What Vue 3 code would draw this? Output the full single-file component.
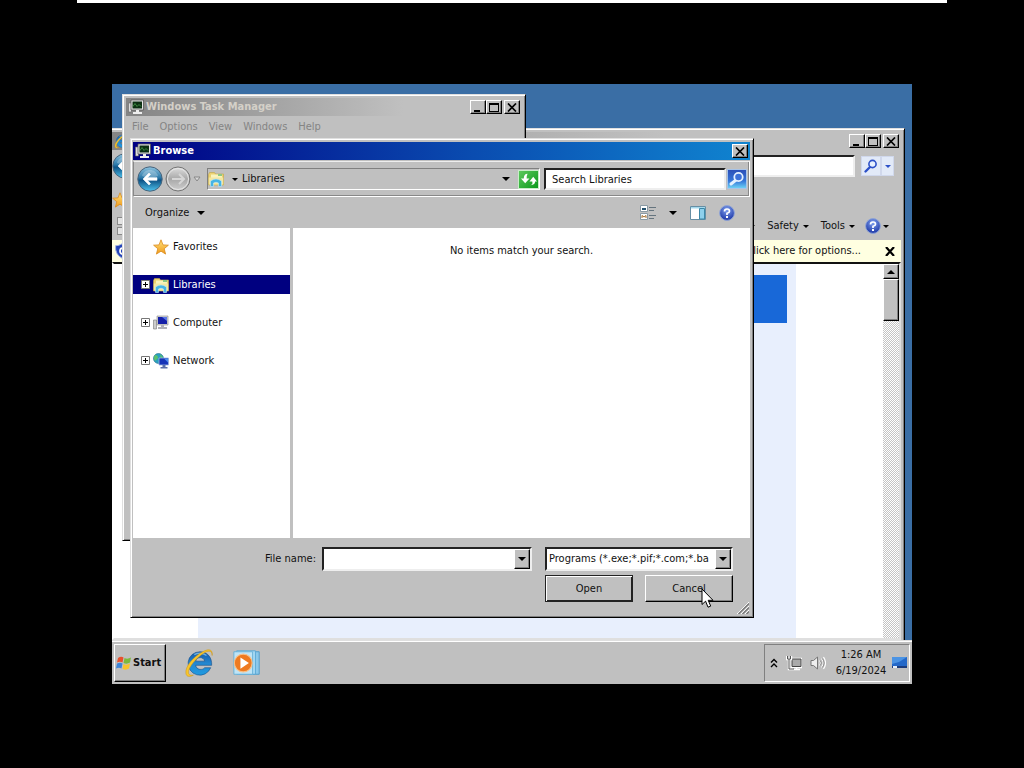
<template>
    <div class="screen">
        <svg class="defs" aria-hidden="true">
            <defs>
                <linearGradient id="gBlue" x1="0" y1="0" x2="0" y2="1">
                    <stop offset="0" stop-color="#8fc4e0" />
                    <stop offset="0.45" stop-color="#2a78a8" />
                    <stop offset="0.55" stop-color="#0d5285" />
                    <stop offset="1" stop-color="#4fc4ee" />
                </linearGradient>
                <linearGradient id="gGrey" x1="0" y1="0" x2="0" y2="1">
                    <stop offset="0" stop-color="#dedede" />
                    <stop offset="0.5" stop-color="#a8a8a8" />
                    <stop offset="1" stop-color="#d0d0d0" />
                </linearGradient>
                <linearGradient id="gStar" x1="0" y1="0" x2="0" y2="1">
                    <stop offset="0" stop-color="#ffe27a" />
                    <stop offset="1" stop-color="#f09a1c" />
                </linearGradient>
                <radialGradient id="gHelp" cx="0.5" cy="0.3" r="0.7">
                    <stop offset="0" stop-color="#7fa0ee" />
                    <stop offset="1" stop-color="#1a34a4" />
                </radialGradient>
                <linearGradient id="gIe" x1="0" y1="0" x2="0" y2="1">
                    <stop offset="0" stop-color="#1559a8" />
                    <stop offset="0.5" stop-color="#2487d0" />
                    <stop offset="1" stop-color="#1f9be0" />
                </linearGradient>
            </defs>
            <symbol id="monitor" viewBox="0 0 16 16">
                <path d="M.5 4h3v9h-3z" fill="#ddd" stroke="#666" stroke-width=".6" />
                <path d="M3 1h12.500v10H3z" fill="#e6e6e6" stroke="#555" stroke-width=".8" />
                <path d="M4.500 2.500h9.500v7H4.500z" fill="#0b2f12" />
                <path d="M5 7.500l2-3 2 3 2-2 2 2" fill="none" stroke="#3c8a42" />
                <path d="M8 11h3v2h3v2H5v-2h3z" fill="#eee" />
            </symbol>
            <symbol id="back" viewBox="0 0 26 26">
                <circle cx="13" cy="13" r="12.200" fill="url(#gBlue)" stroke="#48637a" />
                <path d="M5 10C7 2 19 2 21 10q-8 4-16 0z" fill="#fff" opacity=".25" />
                <path d="M6 13l6-6 1.500 1.500L10.500 11.700H20v2.600h-9.500l3 3.200L12 19z" fill="#fff" stroke="#fff" stroke-width=".6" />
            </symbol>
            <symbol id="forward" viewBox="0 0 26 26">
                <circle cx="13" cy="13" r="12" fill="url(#gGrey)" stroke="#757575" />
                <circle cx="13" cy="13" r="10.500" fill="none" stroke="#e6e6e6" />
                <path d="M7 13h12M14 8l5 5-5 5" fill="none" stroke="#d6d6d6" stroke-width="2" />
            </symbol>
            <symbol id="star" viewBox="0 0 16 16">
                <path d="M8 .8l2 5.100 5.400.3-4.200 3.500 1.400 5.400L8 12.200l-4.600 2.900 1.400-5.400L.6 6.200 6 5.900z"
                    fill="url(#gStar)" stroke="#d98a1c" stroke-width=".8" />
            </symbol>
            <symbol id="folder" viewBox="0 0 16 16">
                <path d="M.5 3.500l1-2h5l1 1.500h8v11H.5z" fill="#ecd270" stroke="#c0a448" stroke-width=".6" />
                <path d="M3 3.500h11v5H3z" fill="#f9f2bc" />
                <path d="M10 3h4v2h-4z" fill="#8cc884" />
                <path d="M.8 6.500h14.400v7H.8z" fill="#f3e6a0" />
                <path d="M2.500 15.500V10q5.500-4 11 0v5.500h-3V12q-2.500-1.500-5 0v3.500z" fill="#46b4e4" stroke="#bfe8f8" stroke-width=".6" />
            </symbol>
            <symbol id="help" viewBox="0 0 16 16">
                <circle cx="8" cy="8" r="7.400" fill="url(#gHelp)" stroke="#8ea4d8" />
                <path d="M5.500 6.500Q5.500 4 8 4t2.500 2.200Q10.500 7.500 8 8.300V10" fill="none" stroke="#fff" stroke-width="1.700" />
                <path d="M7 11h2v2H7z" fill="#fff" />
            </symbol>
            <symbol id="shield" viewBox="0 0 16 16">
                <path d="M8 .8q3 2 6.500 2Q15 11.500 8 15.200 1 11.500 1.500 2.800 5 2.800 8 .8z" fill="#2444b8" stroke="#a8b8e0" />
                <path d="M11 5.500q-5-1.500-5 2.500t5 2.500" fill="none" stroke="#fff" stroke-width="1.800" />
            </symbol>
            <symbol id="ie" viewBox="0 0 32 32">
                <path fill-rule="evenodd" d="M17 4a12.500 12.500 0 1 0 11.500 17h-6.500c-2 3-9 2.500-9.500-2.500h17C30 10 25 4 17 4zM12.500 14c1-5 8.500-5 9.500 0z"
                    fill="url(#gIe)" stroke="#124a86" stroke-width=".6" />
                <path d="M11 7a10 8 0 0 1 13 1" fill="none" stroke="#8fd0f4" stroke-width="1.500" opacity=".7" />
                <path d="M30 8C31 2 27 0 20 4 10 9 1 20 2 27c.6 4 4 4 8 2-4 .5-6-1-5-5C7 17 17 7 24 4c4-1.500 6 0 6 4z"
                    fill="#f7c52c" stroke="#c98f10" stroke-width=".5" />
            </symbol>
            <symbol id="lens" viewBox="0 0 16 16">
                <path d="M2.500 13.500L7 9" stroke="#2c50c8" stroke-width="2.400" stroke-linecap="round" />
                <circle cx="9.500" cy="6" r="3.600" fill="#e8f1ff" stroke="#2c50c8" stroke-width="1.600" />
            </symbol>
            <symbol id="computer" viewBox="0 0 16 16">
                <path d="M.5 5h3v9h-3z" fill="#ccc" stroke="#777" stroke-width=".6" />
                <path d="M4 1h11v9H4z" fill="#d8d8d8" stroke="#888" stroke-width=".6" />
                <path d="M5 2h9v7H5z" fill="#1620a8" />
                <path d="M9 2h5v4z" fill="#5a78e8" />
                <path d="M8 10h3v2h3v2H5v-2h3z" fill="#b0b0b8" />
            </symbol>
            <symbol id="network" viewBox="0 0 16 16">
                <circle cx="5.500" cy="5.500" r="5" fill="#2aa0c0" stroke="#17698c" stroke-width=".6" />
                <path d="M2 2q3 0 3 3l-3 3Q0 5 2 2zM7 1l3 3-2 2z" fill="#5cc26c" />
                <path d="M6 5h9.500v7H6z" fill="#1634b8" stroke="#9ab4e0" stroke-width=".8" />
                <path d="M11 5.500h4v4z" fill="#4c8cf0" />
                <path d="M9.500 12h3v2h2v1.500h-7V14h2z" fill="#5a70a8" />
            </symbol>
            <symbol id="minus" viewBox="0 0 10 9"><path d="M1 7h6v2H1z" /></symbol>
            <symbol id="max" viewBox="0 0 10 9"><path fill-rule="evenodd" d="M0 0h10v9H0zM1 2v6h8V2z" /></symbol>
            <symbol id="x" viewBox="0 0 10 9"><path d="M1 .5l8 8M9 .5l-8 8" stroke="#000" stroke-width="1.700" /></symbol>
        </svg>

        <div class="strip"></div>
        <main class="desktop">
            <section class="frame browser" aria-label="Internet Explorer">
                <header class="titlebar inactive">
                    <svg class="icon"><use href="#ie" /></svg>
                    <span class="spacer"></span>
                    <div class="caption">
                        <button v-for="b in captionButtons" :key="b" class="cap" :class="b" :aria-label="b">
                            <svg><use :href="'#' + b" /></svg>
                        </button>
                    </div>
                </header>
                <div class="browser_nav">
                    <button class="round" aria-label="Back"><svg><use href="#back" /></svg></button>
                    <input class="sunken address_input" aria-label="Address">
                    <button class="find" aria-label="Search"><svg class="icon"><use href="#lens" /></svg></button>
                    <button class="find narrow" aria-label="Search options"><i class="caret tiny blue"></i></button>
                </div>
                <div class="favorites_row"><svg class="icon"><use href="#star" /></svg></div>
                <div class="command_row">
                    <div class="tabs"><i></i><i></i></div>
                    <span class="spacer"></span>
                    <button v-for="c in commands" :key="c" class="flat">{{ c }}<i class="caret tiny"></i></button>
                    <button class="flat" aria-label="Help"><svg class="icon"><use href="#help" /></svg><i class="caret tiny"></i></button>
                </div>
                <div class="info_bar">
                    <svg class="icon"><use href="#shield" /></svg>
                    <span class="spacer"></span>
                    <a href="#">Click here for options...</a>
                    <button class="flat" aria-label="Dismiss">
                        <svg class="dismiss" viewBox="0 0 10 9"><path d="M1 0l8 9M9 0L1 9" stroke="#000" stroke-width="2.200" /></svg>
                    </button>
                </div>
                <div class="page">
                    <div class="page_body">
                        <div class="page_column"><div class="page_banner"></div></div>
                    </div>
                    <div class="scrollbar">
                        <button class="raised scroll_up" aria-label="Scroll up"><i class="caret up"></i></button>
                        <div class="raised thumb"></div>
                    </div>
                </div>
            </section>

            <section class="frame taskman" aria-label="Windows Task Manager">
                <header class="titlebar inactive">
                    <svg class="icon"><use href="#monitor" /></svg>
                    <h2>Windows Task Manager</h2>
                    <div class="caption">
                        <button v-for="b in captionButtons" :key="b" class="cap" :class="b" :aria-label="b">
                            <svg><use :href="'#' + b" /></svg>
                        </button>
                    </div>
                </header>
                <nav class="menu">
                    <button v-for="m in menus" :key="m" class="flat">{{ m }}</button>
                </nav>
            </section>

            <section class="frame dialog" role="dialog" aria-label="Browse">
                <header class="titlebar active">
                    <svg class="icon"><use href="#monitor" /></svg>
                    <h2>Browse</h2>
                    <div class="caption">
                        <button class="cap x" aria-label="Close"><svg><use href="#x" /></svg></button>
                    </div>
                </header>
                <div class="nav_row">
                    <button class="round" aria-label="Back"><svg><use href="#back" /></svg></button>
                    <button class="round" aria-label="Forward"><svg><use href="#forward" /></svg></button>
                    <button class="flat recent" aria-label="Recent pages">
                        <svg viewBox="0 0 8 6"><path d="M1 1h6L4 5z" fill="#d8d8d8" stroke="#888" /></svg>
                    </button>
                    <div class="crumbs">
                        <svg class="icon"><use href="#folder" /></svg>
                        <button class="flat"><i class="caret tiny"></i>Libraries</button>
                        <span class="spacer"></span>
                        <button class="flat" aria-label="Previous locations"><i class="caret"></i></button>
                        <button class="refresh" aria-label="Refresh">
                            <svg viewBox="0 0 20 18">
                                <path d="M9 3Q5 3 5 8H2l4.500 5L11 8H8Q8 5 9 3zM11 15q4 0 3-4h-3l4-5 4 5h-2q0 4-6 4z" fill="#fff" />
                            </svg>
                        </button>
                    </div>
                    <input v-model="search" class="sunken search" aria-label="Search">
                    <button class="go" aria-label="Search">
                        <svg viewBox="0 0 18 18">
                            <path d="M3 14l5-4" stroke="#e4f0ff" stroke-width="3" stroke-linecap="round" />
                            <circle cx="10.500" cy="7" r="4.200" fill="#3c70d8" stroke="#e4f0ff" stroke-width="1.800" />
                        </svg>
                    </button>
                </div>
                <div class="toolbar">
                    <button class="flat organize">Organize<i class="caret"></i></button>
                    <span class="spacer"></span>
                    <button class="flat" aria-label="Change view">
                        <svg class="icon" viewBox="0 0 16 16">
                            <path d="M.5.500h7v6h-7zM.5 8.500h7v6h-7z" fill="#fff" stroke="#8a9aa4" />
                            <path d="M2 4h4" stroke="#24506c" stroke-width="2" />
                            <path d="M2 13V10.500l2 1.500 2-1.500V13" stroke="#a06a28" fill="none" />
                            <path d="M9 2.500h7M9 5.500h5M9 10.500h7M9 13.500h5" stroke="#65747e" />
                        </svg>
                    </button>
                    <button class="flat" aria-label="More views"><i class="caret"></i></button>
                    <button class="flat" aria-label="Preview pane">
                        <svg class="icon" viewBox="0 0 16 16">
                            <path d="M.5 1.500h15v13H.5z" fill="#fff" stroke="#668ea4" />
                            <path d="M1 2h14v1.500H1z" fill="#a4d8ec" />
                            <path d="M9.500 3.500h5v10.500h-5z" fill="#8ed0ec" stroke="#3c88a8" />
                        </svg>
                    </button>
                    <button class="flat" aria-label="Help"><svg class="icon"><use href="#help" /></svg></button>
                </div>
                <div class="panes">
                    <ul class="tree">
                        <li v-for="n in nodes" :key="n.name" :class="{ selected: n.name === selected }" @click="selected = n.name">
                            <span class="expander">
                                <svg v-if="n.expand" viewBox="0 0 9 9">
                                    <path d="M.5.5h8v8h-8z" fill="#fff" stroke="#777" />
                                    <path d="M2 4.500h5M4.500 2v5" stroke="#000" />
                                </svg>
                            </span>
                            <svg class="icon"><use :href="'#' + n.icon" /></svg>
                            <span>{{ n.name }}</span>
                        </li>
                    </ul>
                    <div class="files">No items match your search.</div>
                </div>
                <form class="footer" @submit.prevent>
                    <div class="fields">
                        <label for="filename">File name:</label>
                        <div class="sunken combo name_combo">
                            <input id="filename" v-model="fileName">
                            <button type="button" class="raised drop" aria-label="Recent file names"><i class="caret"></i></button>
                        </div>
                        <div class="sunken combo type_combo">
                            <select aria-label="File type">
                                <option>Programs (*.exe;*.pif;*.com;*.ba</option>
                            </select>
                            <span class="raised drop"><i class="caret"></i></span>
                        </div>
                    </div>
                    <div class="actions">
                        <button class="raised push default">Open</button>
                        <button type="button" class="raised push">Cancel</button>
                    </div>
                    <svg class="grip" viewBox="0 0 12 12">
                        <path d="M0 12L12 0M4 12l8-8M8 12l4-4" stroke="#fff" />
                        <path d="M1.500 12L12 1.500M5.500 12L12 5.500M9.500 12L12 9.500" stroke="#777" stroke-width="1.300" />
                    </svg>
                </form>
            </section>

            <footer class="taskbar">
                <button class="raised start">
                    <svg viewBox="0 0 16 16">
                        <path d="M2 3q3-2 5.500-.5L6.500 7.500Q4 6 1 7.500z" fill="#e8502c" />
                        <path d="M8.500 3q3 1.500 6.500-.5L14 7.500q-3 2-6.500.5z" fill="#7cba3c" />
                        <path d="M1 8.500q3-1.500 5.500 0l-1 5Q3 12 0 13.500z" fill="#3c84d8" />
                        <path d="M7.500 9q3 1.500 6.500-.5l-1 5q-3 2-6.500.5z" fill="#f8c42c" />
                    </svg>
                    Start
                </button>
                <button class="flat quick" aria-label="Internet Explorer"><svg><use href="#ie" /></svg></button>
                <button class="flat quick" aria-label="Windows Media Player">
                    <svg viewBox="0 0 32 32">
                        <path d="M8 4h21v24H8z" fill="#8cc8ea" stroke="#4c9ccc" />
                        <path d="M5 3h20v25H5z" fill="#a8daf4" stroke="#5aa8d4" />
                        <path d="M2 4h20v24H2z" fill="#bfe4f6" stroke="#68b0d8" />
                        <circle cx="12" cy="16" r="9.500" fill="#ee7a20" stroke="#f8c088" stroke-width="1.200" />
                        <path d="M9 10l9 6-9 6z" fill="#fff" />
                    </svg>
                </button>
                <span class="spacer"></span>
                <div class="tray">
                    <button class="flat" aria-label="Show hidden icons">
                        <svg class="chevrons" viewBox="0 0 8 10"><path d="M1 4.500L4 1.500l3 3M1 9l3-3 3 3" fill="none" stroke="#000" stroke-width="1.400" /></svg>
                    </button>
                    <svg class="icon" viewBox="0 0 16 16">
                        <path d="M5.500 3.500h10v9h-10z" fill="#9a9a9a" stroke="#fff" stroke-width="1.500" />
                        <path d="M6 4h9v7.500H6z" fill="#aaa" stroke="#444" />
                        <path d="M7 14.500h7M10.500 12v2" stroke="#fff" stroke-width="1.500" />
                        <path d="M1 1v3h4V1M3 4v10h4" fill="none" stroke="#fff" stroke-width="2.400" />
                        <path d="M1.500 1v3h3V1M3 4v10h5" fill="none" stroke="#555" />
                    </svg>
                    <svg class="icon" viewBox="0 0 16 16">
                        <path d="M1 5.500h2.500L7.500 2v12l-4-3.500H1z" fill="#eee" stroke="#777" />
                        <path d="M9.500 5.500q2 2.500 0 5M11.500 3.500q3.500 4.500 0 9M13.500 2q4 6 0 12" fill="none" stroke="#fff" stroke-width="1.200" />
                        <path d="M10.300 5.500q2 2.500 0 5M12.300 3.500q3.500 4.500 0 9" fill="none" stroke="#777" stroke-width=".8" />
                    </svg>
                    <time class="clock">1:26 AM<br>6/19/2024</time>
                    <svg class="peek" viewBox="0 0 15 14">
                        <path d="M0 1h15v9H0z" fill="#2468c8" />
                        <path d="M0 1h15L7 6 0 8z" fill="#4c94e4" />
                        <path d="M0 10h15v2H0z" fill="#1c3c7c" />
                        <path d="M1 10h4v2H1z" fill="#e4eefa" />
                    </svg>
                </div>
            </footer>

            <svg class="pointer" viewBox="0 0 13 21">
                <path d="M1 1v15.500l3.600-3.300 2.400 6 2.700-1.100-2.500-5.800H12z" fill="#fff" stroke="#000" />
            </svg>
        </main>
    </div>
</template>

<script setup>
import { ref } from 'vue'

const captionButtons = ['minus', 'max', 'x']
const menus = ['File', 'Options', 'View', 'Windows', 'Help']
const commands = ['Page', 'Safety', 'Tools']
const nodes = [
    { name: 'Favorites', icon: 'star', expand: false },
    { name: 'Libraries', icon: 'folder', expand: true },
    { name: 'Computer', icon: 'computer', expand: true },
    { name: 'Network', icon: 'network', expand: true },
]
const selected = ref('Libraries')
const search = ref('Search Libraries')
const fileName = ref('')
</script>

<style>
body {
    margin: 0;
    background: #000;
}
</style>

<style scoped>
* {
    box-sizing: border-box;
}

.screen {
    display: flex;
    flex-direction: column;
    min-height: 100vh;
    padding-bottom: 84px;
    background: #000;
    font: 11px/14px "DejaVu Sans Condensed", "DejaVu Sans", sans-serif;
    color: #111;
}

button,
input,
select {
    margin: 0;
    padding: 0;
    border: 0;
    border-radius: 0;
    background: none;
    font: inherit;
    color: inherit;
    outline: none;
}

svg {
    display: block;
    flex: none;
}

.defs {
    position: absolute;
    width: 0;
    height: 0;
}

.strip {
    height: 3px;
    margin: 0 77px 81px;
    background: #fff;
}

.desktop {
    position: relative;
    flex: 1;
    margin: 0 112px;
    overflow: hidden;
    background: #3a6ea5;
}

.spacer {
    flex: 1;
}

.icon {
    width: 16px;
    height: 16px;
}

.frame {
    position: absolute;
    display: flex;
    flex-direction: column;
    padding: 3px;
    background: #c0c0c0;
    border: 1px solid;
    border-color: #dfdfdf #000 #000 #dfdfdf;
    box-shadow: inset 1px 1px #fff, inset -1px -1px #808080;
}

.raised,
.cap {
    background: #c0c0c0;
    border: 1px solid;
    border-color: #fff #000 #000 #fff;
    box-shadow: inset -1px -1px #808080;
}

.sunken {
    background: #fff;
    border: 2px solid;
    border-color: #222 #eee #eee #222;
}

.flat {
    display: flex;
    align-items: center;
}

.caret {
    width: 0;
    height: 0;
    border: 4px solid transparent;
    border-top-color: #000;
    border-bottom: 0;
}

.caret.tiny {
    border-width: 3px 3px 0;
}

.caret.blue {
    border-top-color: #2c50c8;
}

.caret.up {
    border-width: 0 4px 4px;
    border-bottom: 4px solid #000;
}

/* title bars */
.titlebar {
    display: flex;
    flex: none;
    align-items: center;
    gap: 2px;
    height: 18px;
    padding: 0 2px;
}

.titlebar h2 {
    flex: 1;
    margin: 0;
    font-size: 11px;
    font-weight: bold;
}

.active {
    background: linear-gradient(90deg, #000084, #0a4cb0 55%, #1084d0);
    color: #fff;
}

.inactive {
    background: linear-gradient(90deg, #848484, #c0c0c0 70%);
    color: #d4d0c8;
}

.caption {
    display: flex;
}

.cap {
    display: flex;
    align-items: center;
    justify-content: center;
    width: 16px;
    height: 14px;
}

.cap svg {
    width: 10px;
    height: 9px;
}

.cap.x {
    margin-left: 2px;
}

/* browser */
.browser {
    top: 44px;
    right: 7px;
    bottom: 40px;
    left: -4px;
}

.browser_nav {
    display: flex;
    align-items: center;
    height: 32px;
    padding-right: 7px;
}

.address_input {
    flex: 1;
    min-width: 0;
    height: 22px;
    margin-right: 6px;
}

.find {
    display: flex;
    align-items: center;
    justify-content: center;
    width: 20px;
    height: 20px;
    background: #e2eaf8;
    border: 1px solid #d0d8ec;
}

.find.narrow {
    width: 13px;
}

.favorites_row {
    height: 30px;
    padding-top: 10px;
}

.command_row {
    display: flex;
    align-items: center;
    gap: 12px;
    height: 28px;
    padding-right: 12px;
}

.command_row .flat {
    gap: 4px;
}

.command_row .flat:last-child {
    gap: 2px;
    margin-left: -2px;
}

.tabs {
    display: flex;
    flex-direction: column;
    gap: 2px;
    width: 20px;
    padding-left: 5px;
}

.tabs i {
    height: 8px;
    background: #e4e4e4;
    border: 1px solid #888;
}

.info_bar {
    display: flex;
    align-items: center;
    gap: 24px;
    height: 22px;
    padding: 0 6px 0 2px;
    background: #ffffe1;
}

.info_bar a {
    color: #111;
    text-decoration: none;
}

.dismiss {
    width: 10px;
    height: 9px;
}

.page {
    display: flex;
    flex: 1;
    border: 2px solid;
    border-color: #111 #dfdfdf #dfdfdf #fff;
    background: #fff;
}

.page_body {
    display: flex;
    flex: 1;
}

.page_column {
    flex: 1;
    margin: 0 87px 0 84px;
    padding: 11px 9px;
    background: #e8effd;
}

.page_banner {
    height: 48px;
    background: #1868d8;
}

.scrollbar {
    display: flex;
    flex-direction: column;
    width: 16px;
    background: repeating-conic-gradient(#fff 0 25%, #c4c4c4 0 50%) 0 0 / 2px 2px;
}

.scroll_up {
    display: flex;
    align-items: center;
    justify-content: center;
    height: 15px;
}

.thumb {
    height: 42px;
}

/* task manager */
.taskman {
    top: 10px;
    left: 10px;
    width: 404px;
    height: 447px;
}

.menu {
    display: flex;
    gap: 11px;
    padding: 4px 6px;
    color: #848484;
}

/* dialog */
.dialog {
    top: 54px;
    right: 158px;
    bottom: 66px;
    left: 18px;
    padding: 3px 3px 2px 2px;
}

.nav_row {
    display: flex;
    flex: none;
    align-items: center;
    height: 36px;
    margin-top: 1px;
    padding: 0 2px 0 3px;
    border: 1px solid;
    border-color: #eee #fff #fff #888;
    box-shadow: inset -1px -1px #888;
}

.round svg {
    width: 26px;
    height: 26px;
}

.round + .round {
    margin-left: 2px;
}

.recent {
    margin: 0 6px 0 2px;
}

.recent svg {
    width: 8px;
    height: 6px;
}

.crumbs {
    display: flex;
    flex: 1;
    align-items: center;
    gap: 8px;
    height: 22px;
    border: 1px solid;
    border-color: #808080 #fff #fff #808080;
}

.crumbs .flat {
    gap: 4px;
}

.refresh {
    width: 21px;
    height: 19px;
    background: linear-gradient(135deg, #5cc85c, #0c9a1c);
    border: 1px solid #c8ecc8;
}

.refresh svg {
    width: 19px;
    height: 17px;
}

.search {
    width: 182px;
    height: 22px;
    margin-left: 4px;
    padding: 0 6px;
}

.go {
    width: 20px;
    height: 20px;
    margin-left: 1px;
    background: linear-gradient(#2c50b8, #3474d8 60%, #6cd0f4);
    border: 1px solid #a8c4e8;
}

.go svg {
    width: 18px;
    height: 18px;
}

.toolbar {
    display: flex;
    flex: none;
    align-items: center;
    gap: 13px;
    height: 31px;
    padding: 0 15px 0 12px;
}

.organize {
    gap: 8px;
}

.panes {
    display: flex;
    flex: 1;
    min-height: 0;
    background: #fff;
}

.tree {
    display: flex;
    flex-direction: column;
    gap: 19px;
    width: 160px;
    margin: 0;
    padding: 9px 0;
    border-right: 3px solid #c0c0c0;
    list-style: none;
}

.tree li {
    display: flex;
    align-items: center;
    height: 19px;
    padding-left: 8px;
}

.tree li span:last-child {
    margin-left: 4px;
}

.tree .selected {
    background: #000080;
    color: #fff;
}

.expander {
    width: 12px;
}

.expander svg {
    width: 9px;
    height: 9px;
}

.files {
    flex: 1;
    padding-top: 16px;
    text-align: center;
}

.footer {
    position: relative;
    display: flex;
    flex: none;
    flex-direction: column;
    gap: 4px;
    padding: 9px 17px 13px;
}

.fields {
    display: flex;
    align-items: center;
    justify-content: flex-end;
}

.combo {
    display: flex;
    height: 24px;
}

.combo input,
.combo select {
    flex: 1;
    min-width: 0;
    padding-left: 2px;
    appearance: none;
}

.name_combo {
    width: 210px;
    margin: 0 13px 0 6px;
}

.type_combo {
    width: 188px;
}

.drop {
    display: flex;
    flex: none;
    align-items: center;
    justify-content: center;
    width: 16px;
}

.actions {
    display: flex;
    justify-content: flex-end;
    gap: 12px;
}

.push {
    width: 88px;
    height: 27px;
}

.push.default {
    border-color: #222;
    box-shadow: inset 1px 1px #fff, inset -1px -1px #222;
}

.grip {
    position: absolute;
    right: 1px;
    bottom: 1px;
    width: 12px;
    height: 12px;
}

/* taskbar */
.taskbar {
    position: absolute;
    right: 0;
    bottom: 0;
    left: 0;
    display: flex;
    align-items: center;
    height: 44px;
    padding: 0 2px;
    background: #c0c0c0;
    border-top: 1px solid #dfdfdf;
    box-shadow: inset 0 1px #fff;
}

.start {
    display: flex;
    align-items: center;
    width: 52px;
    height: 38px;
    margin-right: 18px;
    padding-left: 1px;
    font-weight: bold;
}

.start svg {
    width: 16px;
    height: 16px;
    margin-right: 1px;
}

.quick {
    margin-right: 18px;
}

.quick svg {
    width: 30px;
    height: 30px;
}

.tray {
    display: flex;
    align-items: center;
    gap: 8px;
    height: 38px;
    padding: 0 2px 0 5px;
    border: 1px solid;
    border-color: #808080 #fff #fff #808080;
}

.chevrons {
    width: 8px;
    height: 10px;
}

.clock {
    width: 54px;
    line-height: 16px;
    text-align: center;
}

.peek {
    width: 15px;
    height: 14px;
    margin-left: -4px;
}

.pointer {
    position: absolute;
    right: 198px;
    bottom: 75px;
    width: 13px;
    height: 21px;
}
</style>
